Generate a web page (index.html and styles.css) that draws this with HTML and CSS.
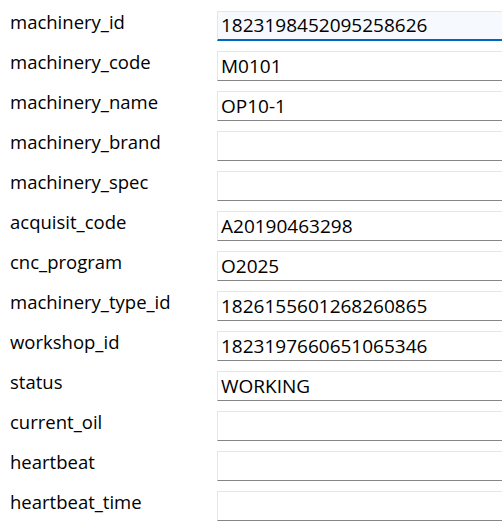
FILE: index.html
```html
<!DOCTYPE html>
<html>
<head>
<meta charset="utf-8">
<link rel="stylesheet" href="styles.css">
</head>
<body>
<div class="form">
  <div class="row"><label class="label">machinery_id</label><div class="field focused">1823198452095258626</div></div>
  <div class="row"><label class="label">machinery_code</label><div class="field">M0101</div></div>
  <div class="row"><label class="label">machinery_name</label><div class="field">OP10-1</div></div>
  <div class="row"><label class="label">machinery_brand</label><div class="field"></div></div>
  <div class="row"><label class="label">machinery_spec</label><div class="field"></div></div>
  <div class="row"><label class="label">acquisit_code</label><div class="field">A20190463298</div></div>
  <div class="row"><label class="label">cnc_program</label><div class="field">O2025</div></div>
  <div class="row"><label class="label">machinery_type_id</label><div class="field">1826155601268260865</div></div>
  <div class="row"><label class="label">workshop_id</label><div class="field">1823197660651065346</div></div>
  <div class="row"><label class="label">status</label><div class="field">WORKING</div></div>
  <div class="row"><label class="label">current_oil</label><div class="field"></div></div>
  <div class="row"><label class="label">heartbeat</label><div class="field"></div></div>
  <div class="row"><label class="label">heartbeat_time</label><div class="field"></div></div>
</div>
</body>
</html>
```
FILE: styles.css
```css
html, body {
  margin: 0;
  padding: 0;
  background: #ffffff;
  overflow: hidden;
}
body {
  font-family: "Open Sans", "Noto Sans", sans-serif;
  color: #000000;
}
.form {
  display: flex;
  flex-direction: column;
  gap: 10px;
  padding: 11px 0 0 10px;
}
.row {
  display: grid;
  grid-template-columns: 207px 1fr;
  height: 30px;
  align-items: start;
}
.label {
  font-size: 18.5px;
  line-height: 24px;
  margin-top: -1px;
  white-space: nowrap;
}
.field {
  box-sizing: border-box;
  height: 30px;
  border: 1px solid #e6e6e6;
  border-right: none;
  border-bottom: 1px solid #868686;
  background: #ffffff;
  font-size: 19px;
  line-height: 28px;
  padding: 0 3px;
  white-space: nowrap;
  overflow: hidden;
}
.field.focused {
  background: #f6f9fd;
  border-bottom: 2px solid #0067c0;
  line-height: 27px;
}
```
